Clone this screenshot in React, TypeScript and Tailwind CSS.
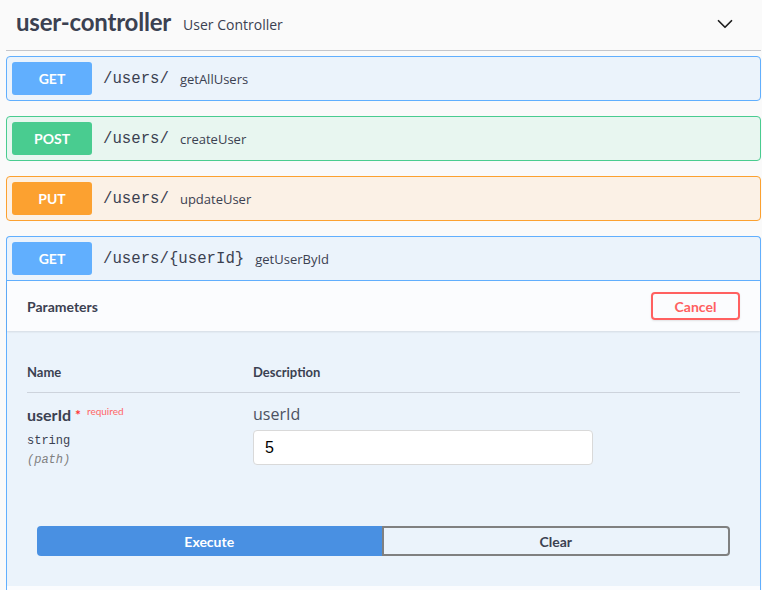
import { ChevronDown } from 'lucide-react';

type Op = {
  method: string;
  path: string;
  summary: string;
  box: string;
  badge: string;
};

const ops: Op[] = [
  { method: 'GET', path: '/users/', summary: 'getAllUsers', box: 'border-[#61affe] bg-[#ebf3fb]', badge: 'bg-[#61affe]' },
  { method: 'POST', path: '/users/', summary: 'createUser', box: 'border-[#49cc90] bg-[#e8f6f0]', badge: 'bg-[#49cc90]' },
  { method: 'PUT', path: '/users/', summary: 'updateUser', box: 'border-[#fca130] bg-[#fbf1e6]', badge: 'bg-[#fca130]' },
];

function Summary({ op }: { op: Op }) {
  return (
    <div className="flex items-center p-[5px]">
      <span className={`flex h-[33px] w-[80px] items-center justify-center rounded-[3px] font-['Lato',sans-serif] text-[14px] font-bold text-white ${op.badge}`}>
        {op.method}
      </span>
      <span className="pl-[11px] pr-[11px] pt-[2px] font-['Liberation_Mono',monospace] text-[15.7px] text-[#3b4151]">{op.path}</span>
      <span className="pt-[2px] font-['Open_Sans',sans-serif] text-[13px] text-[#3b4151]">{op.summary}</span>
    </div>
  );
}

export default function App() {
  return (
    <div className="h-[590px] overflow-hidden bg-[#fafafa] pl-[6px] pr-px text-[#3b4151]">
      {/* Tag header */}
      <div className="flex h-[51px] items-center border-b border-[#c4c6cb] pb-[6px] pl-[10px] pr-[23px]">
        <h3 className="font-['Lato',sans-serif] text-[24px] font-bold tracking-[-0.2px]">user-controller</h3>
        <span className="ml-[12px] mt-1 font-['Open_Sans',sans-serif] text-[14px]">User Controller</span>
        <ChevronDown className="ml-auto mt-[4px] h-[26px] w-[26px] text-[#1f1f1f]" strokeWidth={1.6} />
      </div>

      <div className="mt-[5px] flex flex-col gap-[15px]">
        {ops.map((op) => (
          <div key={op.method} className={`rounded-[4px] border ${op.box}`}>
            <Summary op={op} />
          </div>
        ))}

        {/* Expanded operation */}
        <div className="rounded-t-[4px] border border-b-0 border-[#61affe] bg-[#ebf3fb]">
          <div className="border-b border-[#61affe]">
            <Summary op={{ method: 'GET', path: '/users/{userId}', summary: 'getUserById', box: '', badge: 'bg-[#61affe]' }} />
          </div>

          <div className="flex h-[50px] items-center justify-between bg-[#fbfcfe] px-5 shadow-[0_1px_2px_rgba(0,0,0,0.1)]">
            <h4 className="font-['Lato',sans-serif] text-[14px] font-bold">Parameters</h4>
            <button className="h-[28px] w-[89px] rounded-[4px] border-2 border-[#ff6060] font-['Lato',sans-serif] text-[14px] font-bold text-[#ff6060] shadow-[0_1px_2px_rgba(0,0,0,0.1)]">
              Cancel
            </button>
          </div>

          <div className="px-5">
            <div className="flex border-b border-[#cdd3dc] pb-3 pt-[33px] font-['Lato',sans-serif] text-[13px] font-bold leading-4">
              <div className="w-[226px]">Name</div>
              <div>Description</div>
            </div>
            <div className="flex pt-3">
              <div className="w-[226px]">
                <div className="flex items-start font-['Lato',sans-serif] text-[16px] font-bold leading-5">
                  userId
                  <span className="ml-[4px] text-[14px] leading-5 text-[#ff3333]">*</span>
                  <span className="ml-[6px] -mt-[2px] text-[10px] font-normal leading-4 text-[#ff6666]">required</span>
                </div>
                <div className="mt-2 font-['Liberation_Mono',monospace] text-[12px] leading-4">string</div>
                <div className="mt-[3px] font-['Liberation_Mono',monospace] text-[12px] italic leading-4 text-[#808080]">(path)</div>
              </div>
              <div>
                <div className="font-['Open_Sans',sans-serif] text-[16px] leading-[18px] text-[#4b5161]">userId</div>
                <div className="mt-[7px] flex h-[35px] w-[340px] items-center rounded-[4px] border border-[#d9d9d9] bg-white px-[11px] font-['Liberation_Sans',sans-serif] text-[16px] text-black">
                  5
                </div>
              </div>
            </div>
          </div>

          <div className="flex px-[30px] pb-[30px] pt-[58px] font-['Lato',sans-serif] text-[14px] font-bold">
            <button className="h-[30px] flex-1 rounded-l-[4px] bg-[#4990e2] text-white">Execute</button>
            <button className="h-[30px] flex-1 rounded-r-[4px] border-2 border-[#808080] text-[#3b4151]">Clear</button>
          </div>

          <div className="h-[50px] bg-[#fbfcfe]" />
        </div>
      </div>
    </div>
  );
}
